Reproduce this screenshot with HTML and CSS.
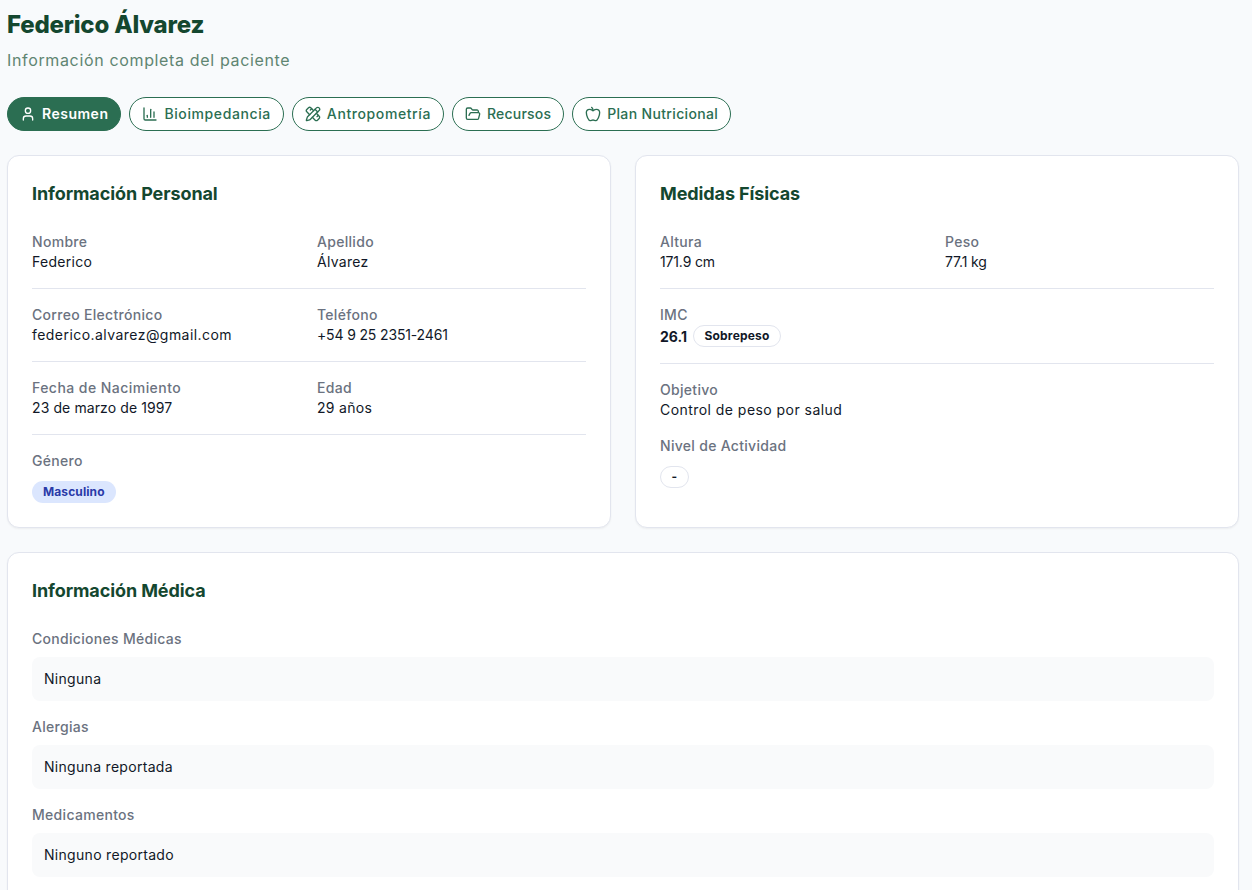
FILE: index.html
```html
<!DOCTYPE html>
<html lang="es">
<head>
    <meta charset="UTF-8">
    <title>Federico Álvarez</title>
    <link rel="stylesheet" href="styles.css">
</head>
<body>
<div class="page">
    <h1 class="name">Federico Álvarez</h1>
    <p class="subtitle">Información completa del paciente</p>

    <div class="tabs">
        <button class="tab active">
            <svg viewBox="0 0 24 24"><path d="M19 21v-2a4 4 0 0 0-4-4H9a4 4 0 0 0-4 4v2"/><circle cx="12" cy="7" r="4"/></svg>
            <span>Resumen</span>
        </button>
        <button class="tab wide">
            <svg viewBox="0 0 24 24"><path d="M3 3v16a2 2 0 0 0 2 2h16"/><path d="M18 17V9"/><path d="M13 17V5"/><path d="M8 17v-3"/></svg>
            <span>Bioimpedancia</span>
        </button>
        <button class="tab wide">
            <svg viewBox="0 0 24 24"><path d="M13 7 8.7 2.7a2.41 2.41 0 0 0-3.4 0L2.7 5.3a2.41 2.41 0 0 0 0 3.4L7 13"/><path d="m8 6 2-2"/><path d="m18 16 2-2"/><path d="m17 11 4.3 4.3c.94.94.94 2.46 0 3.4l-2.6 2.6c-.94.94-2.46.94-3.4 0L11 17"/><path d="M21.174 6.812a1 1 0 0 0-3.986-3.987L3.842 16.174a2 2 0 0 0-.5.83l-1.321 4.352a.5.5 0 0 0 .623.622l4.353-1.32a2 2 0 0 0 .83-.497z"/><path d="m15 5 4 4"/></svg>
            <span>Antropometría</span>
        </button>
        <button class="tab narrow">
            <svg viewBox="0 0 24 24"><path d="m6 14 1.5-2.9A2 2 0 0 1 9.24 10H20a2 2 0 0 1 1.94 2.5l-1.54 6a2 2 0 0 1-1.95 1.5H4a2 2 0 0 1-2-2V5a2 2 0 0 1 2-2h3.9a2 2 0 0 1 1.69.9l.81 1.2a2 2 0 0 0 1.69.9H18a2 2 0 0 1 2 2v2"/></svg>
            <span>Recursos</span>
        </button>
        <button class="tab">
            <svg viewBox="0 0 24 24"><path d="M12 20.94c1.5 0 2.75 1.06 4 1.06 3 0 6-8 6-12.22A4.91 4.91 0 0 0 17 5c-2.22 0-4 1.44-5 2-1-.56-2.78-2-5-2a4.9 4.9 0 0 0-5 4.78C2 14 5 22 8 22c1.25 0 2.5-1.06 4-1.06Z"/><path d="M10 2c1 .5 2 2 2 5"/></svg>
            <span>Plan Nutricional</span>
        </button>
    </div>

    <div class="columns">
        <section class="card">
            <h2 class="card-title">Información Personal</h2>
            <div class="row">
                <div><div class="label">Nombre</div><div class="value">Federico</div></div>
                <div><div class="label">Apellido</div><div class="value">Álvarez</div></div>
            </div>
            <div class="row">
                <div><div class="label">Correo Electrónico</div><div class="value loose">federico.alvarez@gmail.com</div></div>
                <div><div class="label">Teléfono</div><div class="value tight">+54 9 25 2351-2461</div></div>
            </div>
            <div class="row">
                <div><div class="label loose">Fecha de Nacimiento</div><div class="value even">23 de marzo de 1997</div></div>
                <div><div class="label">Edad</div><div class="value">29 años</div></div>
            </div>
            <div class="label badge-label">Género</div>
            <span class="badge blue">Masculino</span>
        </section>

        <section class="card">
            <h2 class="card-title">Medidas Físicas</h2>
            <div class="row">
                <div><div class="label">Altura</div><div class="value tight">171.9 cm</div></div>
                <div><div class="label">Peso</div><div class="value tight">77.1 kg</div></div>
            </div>
            <div class="row">
                <div>
                    <div class="label">IMC</div>
                    <div class="imc"><strong>26.1</strong><span class="badge outline">Sobrepeso</span></div>
                </div>
            </div>
            <div class="stack">
                <div class="label">Objetivo</div>
                <div class="value loose">Control de peso por salud</div>
            </div>
            <div class="label badge-label">Nivel de Actividad</div>
            <span class="badge outline">-</span>
        </section>
    </div>

    <section class="card medical">
        <h2 class="card-title">Información Médica</h2>
        <div class="label">Condiciones Médicas</div>
        <div class="note">Ninguna</div>
        <div class="label">Alergias</div>
        <div class="note">Ninguna reportada</div>
        <div class="label">Medicamentos</div>
        <div class="note">Ninguno reportado</div>
    </section>
</div>
</body>
</html>
```

FILE: styles.css
```css
*{
    margin: 0;
    padding: 0;
    box-sizing: border-box;
}
html,body{
    height: 890px;
    overflow: hidden;
}
body{
    background: #f8fafc;
    font-family: Inter, "Liberation Sans", sans-serif;
    color: #111827;
}
.page{
    padding: 9px 13px 0 7px;
}
.name{
    font-size: 24px;
    line-height: 32px;
    font-weight: 800;
    color: #14472f;
    letter-spacing: -0.2px;
}
.subtitle{
    margin-top: 7px;
    font-size: 16px;
    line-height: 24px;
    color: #5f8572;
    letter-spacing: 0.65px;
}
.tabs{
    display: flex;
    gap: 8px;
    margin-top: 25px;
}
.tab{
    display: flex;
    align-items: center;
    gap: 6px;
    height: 34px;
    padding: 0 12px;
    border: 1px solid #2b6e52;
    border-radius: 17px;
    background: #fff;
    color: #2b6e52;
    font-family: inherit;
    font-size: 14px;
    font-weight: 500;
    letter-spacing: 0.35px;
}
.tab span{
    padding-bottom: 2px;
}
.tab.wide{
    letter-spacing: 0.6px;
}
.tab.narrow{
    letter-spacing: 0.2px;
}
.tab.active{
    background: #2b6e52;
    color: #fff;
    font-weight: 600;
    letter-spacing: 0.5px;
}
.tab svg{
    width: 16px;
    height: 16px;
    fill: none;
    stroke: currentColor;
    stroke-width: 2;
    stroke-linecap: round;
    stroke-linejoin: round;
}
.columns{
    display: grid;
    grid-template-columns: 1fr 1fr;
    gap: 24px;
    margin-top: 24px;
}
.card{
    background: #fff;
    border: 1px solid #e2e5ee;
    border-radius: 12px;
    padding: 24px;
    box-shadow: 0 1px 2px rgba(0,0,0,.05);
}
.card-title{
    font-size: 18px;
    line-height: 28px;
    font-weight: 700;
    color: #14472f;
    margin-bottom: 24px;
    letter-spacing: -0.1px;
}
.row{
    display: grid;
    grid-template-columns: 1fr 1fr;
    gap: 16px;
    padding-bottom: 16px;
    margin-bottom: 16px;
    border-bottom: 1px solid #e2e5ee;
}
.label{
    font-size: 14px;
    line-height: 20px;
    font-weight: 500;
    color: #6b7280;
    letter-spacing: 0.3px;
}
.value{
    font-size: 14px;
    line-height: 20px;
    letter-spacing: 0.3px;
}
.label.loose,.value.loose{
    letter-spacing: 0.45px;
}
.value.even{
    letter-spacing: 0.1px;
}
.value.tight{
    letter-spacing: -0.15px;
}
.stack{
    margin-bottom: 16px;
}
.badge-label{
    margin-bottom: 10px;
}
.badge{
    display: block;
    width: fit-content;
    height: 22px;
    padding: 0 11px;
    border-radius: 11px;
    font-size: 12px;
    line-height: 22px;
    font-weight: 700;
    letter-spacing: 0.1px;
}
.badge.blue{
    background: #dbe6fe;
    color: #2a3aa8;
}
.badge.outline{
    padding: 0 10.5px;
    border: 1px solid #e2e5ee;
    line-height: 20px;
    color: #111827;
    letter-spacing: 0.2px;
}
.imc{
    display: flex;
    align-items: center;
    gap: 6px;
    font-size: 14px;
    height: 22px;
}
.imc strong{
    font-weight: 700;
}
.medical{
    margin-top: 24px;
}
.note{
    height: 44px;
    margin: 8px 0 16px;
    padding: 12px;
    border-radius: 8px;
    background: #f9fafb;
    font-size: 14px;
    line-height: 20px;
    letter-spacing: 0.3px;
}
```
